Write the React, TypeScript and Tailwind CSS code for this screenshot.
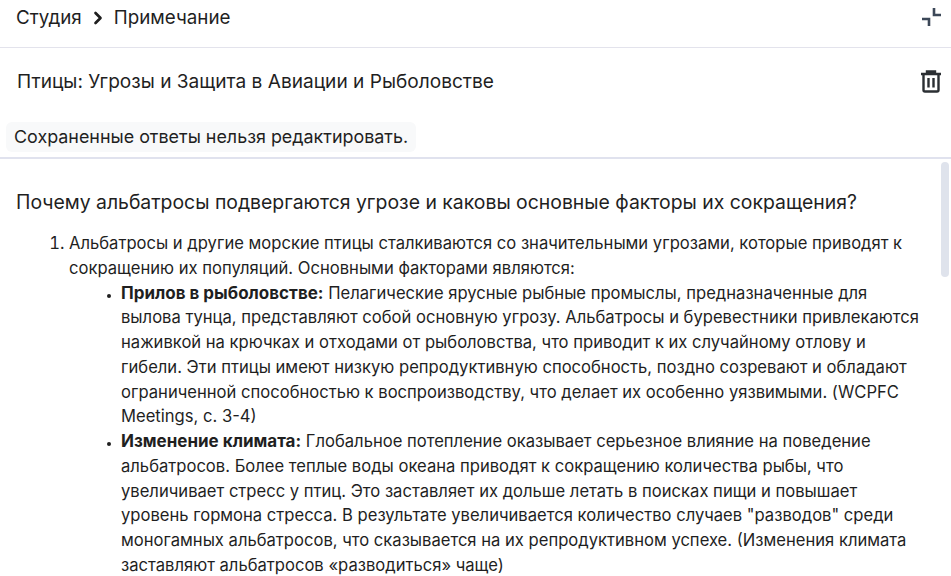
import { ChevronRight } from "lucide-react";

const bullets = [
  {
    title: "Прилов в рыболовстве:",
    text: " Пелагические ярусные рыбные промыслы, предназначенные для вылова тунца, представляют собой основную угрозу. Альбатросы и буревестники привлекаются наживкой на крючках и отходами от рыболовства, что приводит к их случайному отлову и гибели. Эти птицы имеют низкую репродуктивную способность, поздно созревают и обладают ограниченной способностью к воспроизводству, что делает их особенно уязвимыми. (WCPFC Meetings, с. 3-4)",
  },
  {
    title: "Изменение климата:",
    text: " Глобальное потепление оказывает серьезное влияние на поведение альбатросов. Более теплые воды океана приводят к сокращению количества рыбы, что увеличивает стресс у птиц. Это заставляет их дольше летать в поисках пищи и повышает уровень гормона стресса. В результате увеличивается количество случаев \"разводов\" среди моногамных альбатросов, что сказывается на их репродуктивном успехе. (Изменения климата заставляют альбатросов «разводиться» чаще)",
  },
];

export default function App() {
  return (
    <div className="h-screen overflow-hidden bg-white text-[#1f1f1f] font-['Inter',sans-serif] flex flex-col">
      <div className="h-[48px] shrink-0 border-b border-[#e3e3ec] pl-4 pr-[10px] flex justify-between items-start">
        <div className="flex items-center gap-[6px] text-[18.8px] leading-[35px]">
          <span>Студия</span>
          <ChevronRight size={20} strokeWidth={3.2} />
          <span>Примечание</span>
        </div>
        <svg width="20" height="20" viewBox="0 0 20 20" className="mt-[7px]" fill="none" stroke="#3c4858" strokeWidth="2.6">
          <path d="M13 1v7h7" />
          <path d="M1 12h7v7" />
        </svg>
      </div>

      <div className="h-[66px] shrink-0 pl-[17px] pr-[9px] flex justify-between items-center">
        <h1 className="text-[19.1px] font-normal">Птицы: Угрозы и Защита в Авиации и Рыболовстве</h1>
        <svg width="22" height="24" viewBox="0 0 22 24" fill="none" stroke="#2b2f33" strokeWidth="2.4">
          <path d="M1 5h20M7 5V2.5h8V5" />
          <path d="M3.5 5v16a1.5 1.5 0 0 0 1.5 1.5h12a1.5 1.5 0 0 0 1.5-1.5V5" />
          <path d="M8.5 9v9.5M13.5 9v9.5" />
        </svg>
      </div>

      <div className="h-[45px] shrink-0 border-b-2 border-[#e0e2ee] pl-[6px] pt-[8px] flex items-start">
        <div className="h-[30px] px-2 rounded-md bg-[#f8f9fa] flex items-center text-[17.9px]">
          Сохраненные ответы нельзя редактировать.
        </div>
      </div>

      <div className="flex flex-1 min-h-0">
        <div className="flex-1 min-w-0 pl-4 pr-[17px] pt-[30px] overflow-hidden">
          <h2 className="text-[19.4px] leading-[26px] font-normal">
            Почему альбатросы подвергаются угрозе и каковы основные факторы их сокращения?
          </h2>
          <ol className="list-decimal pl-[53px] mt-[16px] text-[16.6px] leading-[24.75px] text-[#1f1f1f]">
            <li>
              Альбатросы и другие морские птицы сталкиваются со значительными угрозами, которые приводят к сокращению их популяций. Основными факторами являются:
              <ul className="list-disc pl-[52px] marker:text-[11px]">
                {bullets.map((b) => (
                  <li key={b.title}>
                    <strong className="font-bold text-[17px]">{b.title}</strong>
                    {b.text}
                  </li>
                ))}
              </ul>
            </li>
          </ol>
        </div>
        <div className="w-[11px] shrink-0 mr-[-1px] pt-[3px]">
          <div className="w-[8px] h-[115px] rounded-md bg-[#dfe3ec]" />
        </div>
      </div>
    </div>
  );
}
